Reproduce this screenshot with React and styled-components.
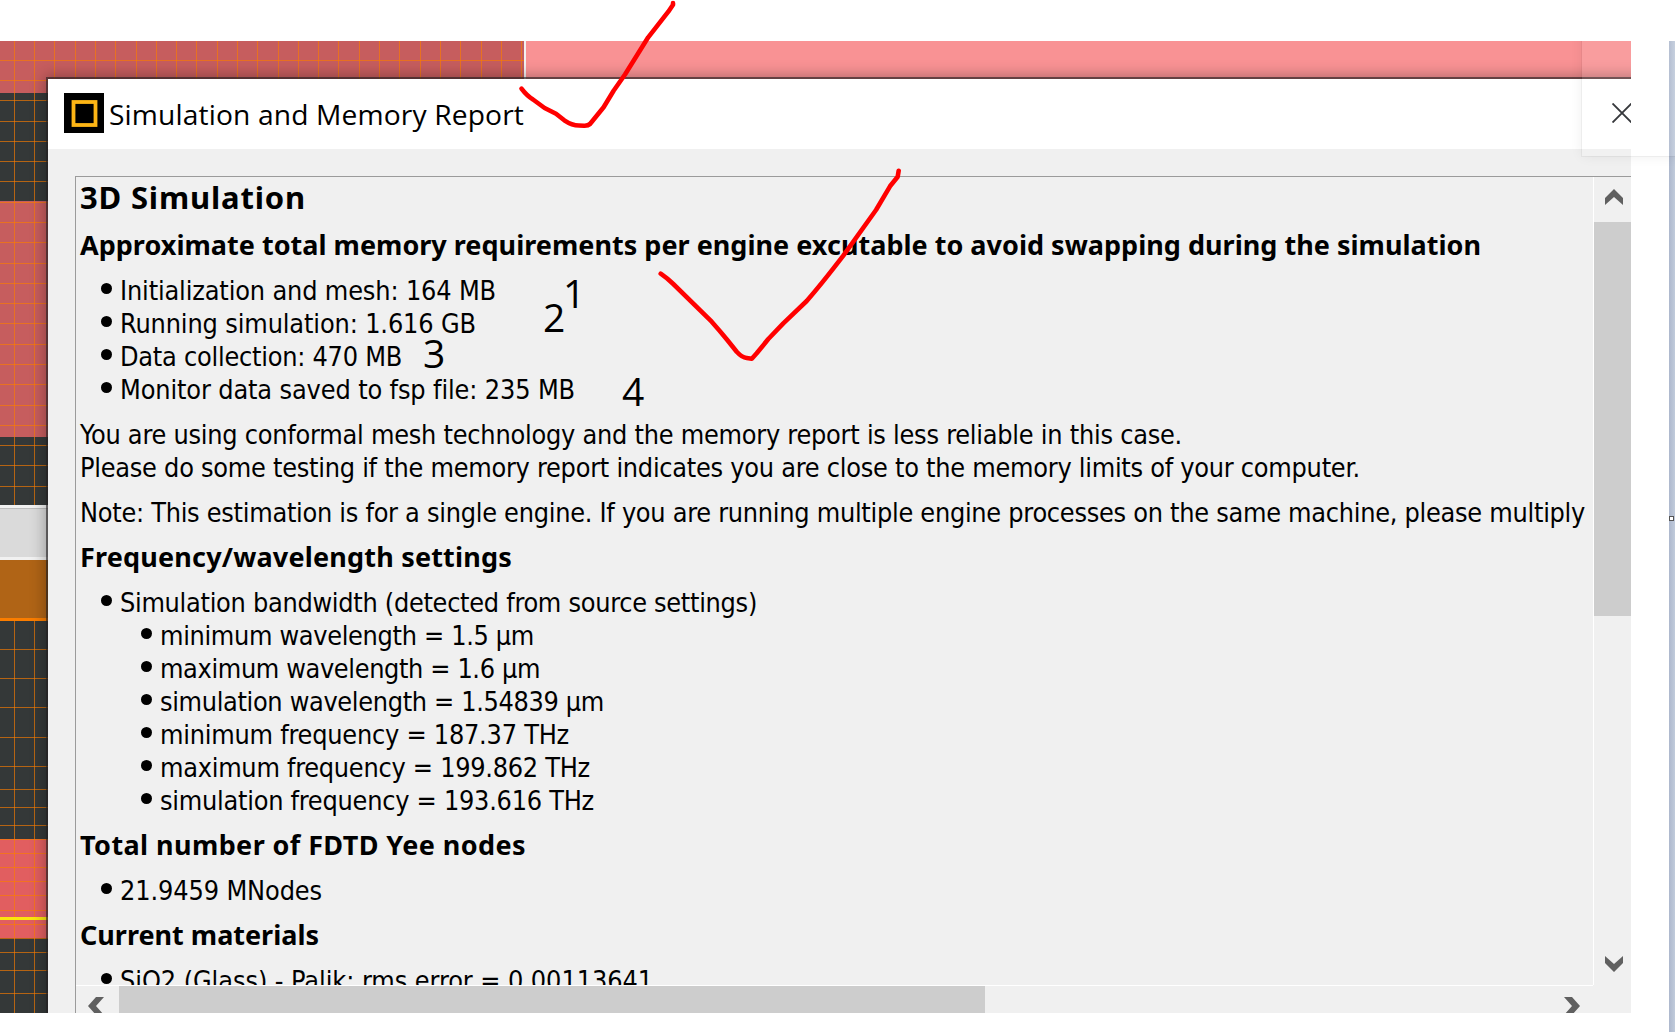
import React, { useLayoutEffect, useRef, useState } from "react";
import styled, { createGlobalStyle } from "styled-components";

const GlobalStyle = createGlobalStyle`
  *, *::before, *::after { box-sizing: border-box; }
  html, body { margin: 0; padding: 0; background: #fff; overflow: hidden; }
`;

const Page = styled.main`
  position: relative;
  display: flex;
  justify-content: space-between;
  width: 1675px;
  height: 1032px;
  padding-top: 41px;
  overflow: hidden;
  background: #fff;
  color: #000;
`;

const Capture = styled.section`
  position: relative;
  width: 1631px;
  height: 972px;
  padding: 38px 0 0 48px;
  overflow: hidden;
`;

const Backdrop = styled.svg`
  position: absolute;
  inset: 0;
  display: block;
`;

const Dialog = styled.div`
  position: relative;
  display: flex;
  flex-direction: column;
  width: 1640px;
  height: 960px;
  background: #f0f0f0;
  box-shadow: 0 0 0 2px rgba(35, 32, 34, 0.62), 0 0 14px 3px rgba(0, 0, 0, 0.3);
`;

const TitleBar = styled.header`
  display: flex;
  align-items: flex-start;
  height: 70px;
  padding: 14px 0 0 16px;
  background: #fff;
`;

const AppIcon = styled.svg`
  display: block;
  width: 40px;
  height: 40px;
  margin-right: 5px;
`;

const Title = styled.h1`
  margin: 1px 0 0;
  font: 400 28.2px/40px "Open Sans", "Noto Sans", sans-serif;
  white-space: nowrap;
`;

const Frame = styled.div`
  display: grid;
  grid-template-columns: 1517px 38px;
  grid-template-rows: 808px 28px;
  margin: 27px 0 0 27px;
  border-top: 1px solid #9b9b9b;
  border-left: 1px solid #9b9b9b;
`;

const Report = styled.article`
  padding: 1px 0 0 4px;
  overflow: hidden;
  font: 400 26.8px/33px "DejaVu Sans Condensed", "Noto Sans", sans-serif;
  white-space: nowrap;
`;

const Heading = styled.h2`
  margin: ${(p) => (p.$large ? "0 0 12px" : "-1px 0 13px")};
  font-size: ${(p) => (p.$large ? "31px" : "27px")};
  line-height: ${(p) => (p.$large ? "39px" : "33px")};
  font-weight: 700;
  font-family: "Noto Sans", sans-serif;
`;

const Paragraph = styled.p`
  margin: 0 0 12px;
`;

const List = styled.ul`
  margin: 0 0 12px;
  padding: 0;
  list-style: none;
`;

const Item = styled.li`
  display: flex;
  height: 33px;
  padding-left: ${(p) => (p.$level === 2 ? 61 : 21)}px;

  &::before {
    content: "";
    flex: none;
    width: 11px;
    height: 11px;
    margin: 9px 8px 0 0;
    border-radius: 50%;
    background: #000;
  }
`;

const Line = styled.span`
  display: block;
  width: max-content;
`;

const VerticalBar = styled.div`
  display: flex;
  flex-direction: column;
  border-left: 1px solid #fff;
  background: #f0f0f0;
`;

const HorizontalBar = styled.div`
  display: flex;
  border-top: 1px solid #fff;
  background: #f0f0f0;
`;

const VerticalThumb = styled.div`
  height: 394px;
  background: #cdcdcd;
`;

const HorizontalThumb = styled.div`
  width: 866px;
  background: #cdcdcd;
`;

const ArrowButton = styled.div`
  flex: none;
  width: ${(p) => p.$w}px;
  height: ${(p) => p.$h}px;
  padding: ${(p) => p.$pad};
  margin: ${(p) => p.$margin || 0};
  overflow: hidden;

  svg { display: block; }
`;

const CloseMark = styled.svg`
  position: absolute;
  left: 1612px;
  top: 62px;
`;

const ScreenEdge = styled.aside`
  display: flex;
  align-items: flex-start;
  width: 6px;
  height: 991px;
  padding-top: 475px;
  background: linear-gradient(90deg, #adb8cd, #c1cbdb);
`;

const Handle = styled.div`
  width: 5px;
  height: 5px;
  border: 1px solid #555;
  background: #fff;
`;

const HoverCard = styled.div`
  position: absolute;
  left: 1582px;
  top: 0;
  width: 110px;
  height: 156px;
  background: rgba(255, 255, 255, 0.1);
  box-shadow: 0 0 0 1px rgba(0, 0, 0, 0.04), 0 0 12px rgba(0, 0, 0, 0.07);
  clip-path: inset(41px 0 -20px -20px);
`;

const Ink = styled.svg`
  position: absolute;
  left: 0;
  top: 0;
  pointer-events: none;
`;

const Note = styled.span`
  position: absolute;
  left: ${(p) => p.$x}px;
  top: ${(p) => p.$y}px;
  font: 400 39px/40px "Open Sans", "Noto Sans", sans-serif;
`;

/* Spreads the letters so that the line takes the given width. */
function Fit({ width, children }) {
  const ref = useRef(null);
  const [spacing, setSpacing] = useState(0);
  useLayoutEffect(() => {
    const natural = ref.current.getBoundingClientRect().width;
    setSpacing((width - natural) / children.length);
  }, [width, children]);
  return (
    <Line ref={ref} style={{ letterSpacing: `${spacing}px` }}>
      {children}
    </Line>
  );
}

function BulletList({ items }) {
  return (
    <List>
      {items.map(([text, width, level]) => (
        <Item key={text} $level={level}>
          <Fit width={width}>{text}</Fit>
        </Item>
      ))}
    </List>
  );
}

const BANDS = [
  [0, 52, "#c65d5e"], [52, 108, "#343838"], [160, 236, "#c65d5e"],
  [396, 68, "#343838"], [464, 55, "#f1f1f1"], [467, 49, "#bdbdbd"],
  [468, 48, "#dadada"], [519, 58, "#b06416"], [577, 3, "#fa7d00"],
  [580, 218, "#343838"], [798, 99, "#e15e60"], [897, 75, "#343838"],
];
const COLUMNS = [14, 34, 54, 75, 95, 115, 136, 156, 176, 196, 217, 237, 257, 278, 298, 318, 338, 359, 379, 399, 420, 440, 460, 481, 501, 521];
const ROWS = [60, 80, 100, 121, 141, 161, 181, 202, 222, 242, 263, 283, 303, 323, 344, 364, 384, 405, 425, 445, 465, 486, 649, 678, 707, 737, 766, 789, 807, 825, 839, 853, 867, 881, 895, 910, 924, 938, 952, 970, 993];

function LayoutCanvas() {
  return (
    <Backdrop width="1631" height="972" shapeRendering="crispEdges">
      {BANDS.map(([y, h, fill]) => (
        <rect key={y} x="0" y={y} width="524" height={h} fill={fill} />
      ))}
      <g fill="#fa7d00" fillOpacity="0.65">
        {COLUMNS.map((x) => (
          <React.Fragment key={x}>
            <rect x={x} y="0" width="1" height="464" />
            <rect x={x} y="580" width="1" height="392" />
          </React.Fragment>
        ))}
        {ROWS.map((y) => (
          <rect key={y} x="0" y={y - 41} width="524" height="1" />
        ))}
      </g>
      <rect x="0" y="876" width="524" height="3" fill="#fbe60d" />
      <rect x="524" y="0" width="2" height="40" fill="#f1f1f1" />
      <rect x="526" y="0" width="1105" height="40" fill="#f99294" />
    </Backdrop>
  );
}

const REQUIREMENTS = [
  ["Initialization and mesh: 164 MB", 376],
  ["Running simulation: 1.616 GB", 356],
  ["Data collection: 470 MB", 282],
  ["Monitor data saved to fsp file: 235 MB", 455],
];
const BANDWIDTH = [
  ["Simulation bandwidth (detected from source settings)", 637],
  ["minimum wavelength = 1.5 µm", 374, 2],
  ["maximum wavelength = 1.6 µm", 380, 2],
  ["simulation wavelength = 1.54839 µm", 444, 2],
  ["minimum frequency = 187.37 THz", 409, 2],
  ["maximum frequency = 199.862 THz", 430, 2],
  ["simulation frequency = 193.616 THz", 434, 2],
];

export default function App() {
  return (
    <>
      <GlobalStyle />
      <Page>
        <Capture>
          <LayoutCanvas />
          <Dialog>
            <TitleBar>
              <AppIcon viewBox="0 0 40 40">
                <rect width="40" height="40" fill="#000" />
                <rect x="9.5" y="9" width="22" height="23" fill="none" stroke="#fdb515" strokeWidth="3.8" />
              </AppIcon>
              <Title><Fit width={415}>Simulation and Memory Report</Fit></Title>
            </TitleBar>
            <Frame>
              <Report>
                <Heading $large><Fit width={226}>3D Simulation</Fit></Heading>
                <Heading>
                  <Fit width={1401}>Approximate total memory requirements per engine excutable to avoid swapping during the simulation</Fit>
                </Heading>
                <BulletList items={REQUIREMENTS} />
                <Paragraph>
                  <Fit width={1102}>You are using conformal mesh technology and the memory report is less reliable in this case.</Fit>
                  <Fit width={1280}>Please do some testing if the memory report indicates you are close to the memory limits of your computer.</Fit>
                </Paragraph>
                <Paragraph>
                  <Fit width={1505}>Note: This estimation is for a single engine. If you are running multiple engine processes on the same machine, please multiply</Fit>
                </Paragraph>
                <Heading><Fit width={432}>Frequency/wavelength settings</Fit></Heading>
                <BulletList items={BANDWIDTH} />
                <Heading><Fit width={446}>Total number of FDTD Yee nodes</Fit></Heading>
                <BulletList items={[["21.9459 MNodes", 202]]} />
                <Heading><Fit width={239}>Current materials</Fit></Heading>
                <BulletList items={[["SiO2 (Glass) - Palik: rms error = 0.00113641", 533]]} />
              </Report>
              <VerticalBar>
                <ArrowButton $w={37} $h={45} $pad="12px 0 0 11px">
                  <svg width="18" height="16"><path d="M0 9L9 0L18 9V16L9 8L0 16Z" fill="#606060" /></svg>
                </ArrowButton>
                <VerticalThumb />
                <ArrowButton $w={37} $h={29} $pad="0 0 0 11px" $margin="340px 0 0">
                  <svg width="18" height="16"><path d="M0 0L9 8L18 0V7L9 16L0 7Z" fill="#606060" /></svg>
                </ArrowButton>
              </VerticalBar>
              <HorizontalBar>
                <ArrowButton $w={43} $h={27} $pad="11px 0 0 12px">
                  <svg width="16" height="18"><path d="M8 0H16L8 9L16 18H8L0 9Z" fill="#606060" /></svg>
                </ArrowButton>
                <HorizontalThumb />
                <ArrowButton $w={29} $h={27} $pad="11px 0 0 0" $margin="0 0 0 579px">
                  <svg width="16" height="18"><path d="M0 0H8L16 9L8 18H0L8 9Z" fill="#606060" /></svg>
                </ArrowButton>
              </HorizontalBar>
            </Frame>
          </Dialog>
          <CloseMark width="20" height="20">
            <path d="M0.500 0.500L19.500 19.500M19.500 0.500L0.500 19.500" stroke="#202226" strokeWidth="1.9" />
          </CloseMark>
        </Capture>
        <ScreenEdge><Handle /></ScreenEdge>
        <HoverCard />
        <Note $x={563} $y={273}>1</Note>
        <Note $x={543} $y={297}>2</Note>
        <Note $x={423} $y={333}>3</Note>
        <Note $x={622} $y={371}>4</Note>
        <Ink width="1675" height="1032" fill="none" stroke="#ff0000" strokeWidth="4.6" strokeLinecap="round" strokeLinejoin="round">
          <path d="M521.5 88.7Q527 96 533 99.500L544.6 108L556 113.700L564.3 120.300Q572 125.500 579 125.500L584 125.800Q588 126 590 124L603.6 107.300L613.600 90.700L625 74.500L648.200 37.300L668.300 11.700L673 4.700V3" />
          <path d="M660.700 273.700Q667 278 673.300 284L711.700 321.700Q720 331 727.300 340L736.700 351.700Q742 357.500 746.700 358L751.800 358.700L756.700 353.300L768.300 339L783.300 323.300L806.700 301Q820 286 843.300 255.700L876 210L890 186.300L897.700 176.700L898.700 170.700" />
        </Ink>
      </Page>
    </>
  );
}
